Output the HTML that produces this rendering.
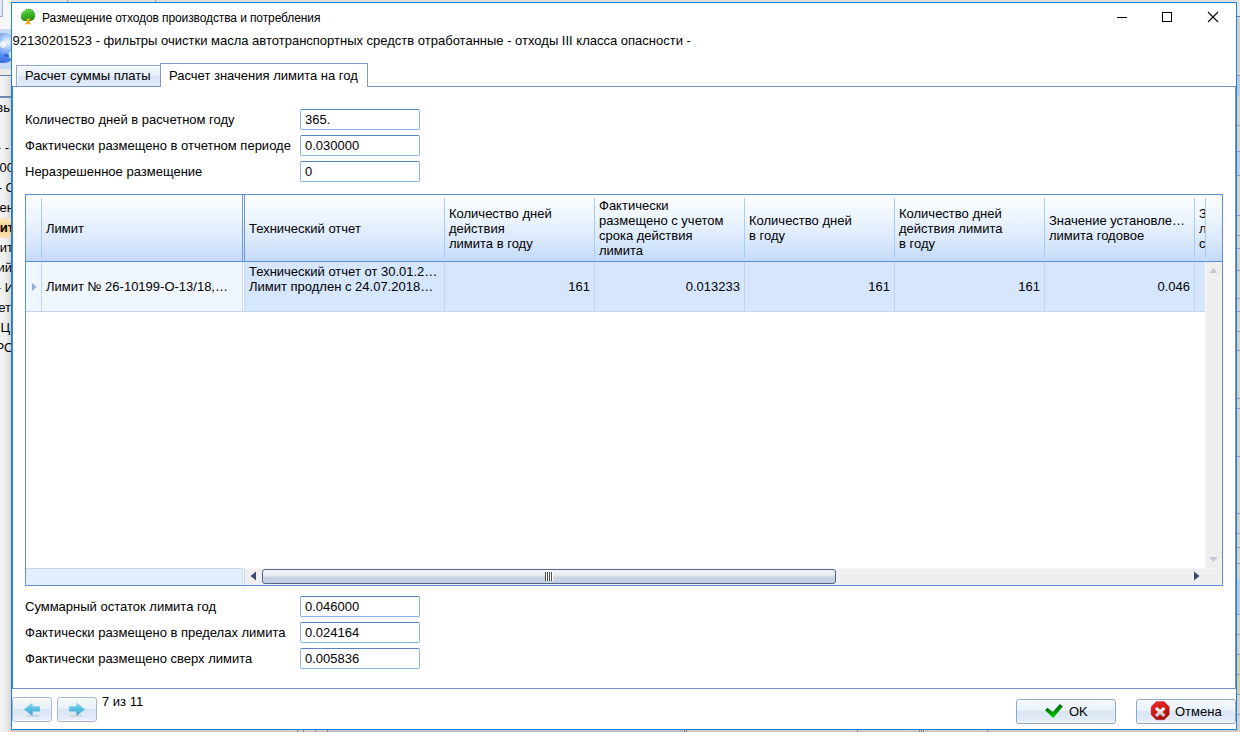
<!DOCTYPE html>
<html><head><meta charset="utf-8">
<style>
*{margin:0;padding:0;box-sizing:border-box}
html,body{width:1240px;height:732px;overflow:hidden;background:#d6d6d6}
body{position:relative;font-family:"Liberation Sans",sans-serif;font-size:12px;color:#000}
.a{position:absolute}
.t{position:absolute;white-space:nowrap;line-height:15px;letter-spacing:0px;font-size:13px}
.fld{position:absolute;left:300px;width:120px;height:21px;border:1px solid #8fb2e6;border-top-color:#5b82bd;border-radius:2px;background:#fff}
.hsep{position:absolute;top:198px;width:1px;height:60px;background:#a9ccf7}
.rsep{position:absolute;top:262px;width:1px;height:49px;background:#c3d3ea}
.btn{position:absolute;border:1px solid #8ea7c9;border-radius:3px;background:linear-gradient(#f5f9fe 0%,#eaf1fa 45%,#d9e5f4 48%,#e2ebf7 85%,#eef4fb 100%);box-shadow:inset 0 1px 0 #fff,inset 0 -1px 0 #f6f9fd}
</style></head><body>
<!-- background app strips -->
<div class="a" style="left:0;top:0;width:1240px;height:3px;background:#dedede"></div>
<div class="a" style="left:67px;top:0;width:1px;height:2px;background:#9a9a9a"></div>
<div class="a" style="left:155px;top:0;width:1px;height:2px;background:#9a9a9a"></div>
<div class="a" style="left:0;top:730px;width:1240px;height:2px;background:#cbcbcb"></div><div class="a" style="left:328px;top:730px;width:356px;height:2px;background:#b7c1d1"></div><div class="a" style="left:297px;top:730px;width:1px;height:2px;background:#7b8496"></div><div class="a" style="left:303px;top:730px;width:1px;height:2px;background:#7b8496"></div><div class="a" style="left:315px;top:730px;width:1px;height:2px;background:#7b8496"></div><div class="a" style="left:327px;top:730px;width:1px;height:2px;background:#7b8496"></div><div class="a" style="left:684px;top:730px;width:1px;height:2px;background:#7b8496"></div><div class="a" style="left:686px;top:730px;width:1px;height:2px;background:#7b8496"></div><div class="a" style="left:857px;top:730px;width:1px;height:2px;background:#7b8496"></div><div class="a" style="left:919px;top:730px;width:1px;height:2px;background:#7b8496"></div><div class="a" style="left:921px;top:730px;width:1px;height:2px;background:#7b8496"></div><div class="a" style="left:923px;top:730px;width:1px;height:2px;background:#7b8496"></div><div class="a" style="left:987px;top:730px;width:1px;height:2px;background:#7b8496"></div>
<div class="a" style="left:0;top:0;width:11px;height:732px;overflow:hidden;background:linear-gradient(90deg,#f3f3f3,#ebebeb 60%,#dadada 90%,#d9d3cd)">
  <div class="a" style="left:0;top:0;width:11px;height:29px;background:#f6f6f6"></div>
  <div class="a" style="left:0;top:0;width:3px;height:17px;border-right:1px solid #9fb3d0;border-bottom:1px solid #9fb3d0;background:#dfe8f4"></div>
  <div class="a" style="left:0;top:29px;width:11px;height:40px;background:#c8daf1"></div>
  <div class="a" style="left:-12px;top:33px;width:30px;height:30px;border-radius:50%;overflow:hidden;background:radial-gradient(circle at 65% 30%,#f4f8ff 0,#a9c8f6 22%,#4f86ea 55%,#2a62dc 85%,#6f9ff0 100%)">
    <div class="a" style="left:12px;top:8px;width:6px;height:7px;border-radius:50%;background:rgba(255,255,255,0.75)"></div>
    <div class="a" style="left:20px;top:18px;width:9px;height:8px;border-radius:50%;background:rgba(235,245,255,0.8)"></div>
    <div class="a" style="left:16px;top:21px;width:5px;height:3px;background:rgba(20,70,220,0.6)"></div>
  </div>
  <div class="a" style="left:0;top:69px;width:11px;height:6px;background:#ece9e4"></div>
  <div class="a" style="left:0;top:75px;width:11px;height:1px;background:#5f7fae"></div>
  <div class="a" style="left:0;top:96px;width:11px;height:2px;background:#6d88b3"></div>
  <div class="a" style="left:0;top:218px;width:11px;height:20px;background:linear-gradient(#f9e7c2,#f5cf85 50%,#f8e2b5)"></div>
  <div class="t" style="right:1px;top:100px;">вь</div><div class="t" style="right:2px;top:140px;">- -</div><div class="t" style="right:-3px;top:160px;">000</div><div class="t" style="right:-4px;top:180px;">- С</div><div class="t" style="right:-3px;top:200px;">ден</div><div class="t" style="right:-3px;top:220px;font-weight:bold;">ит</div><div class="t" style="right:-2px;top:240px;">ит</div><div class="t" style="right:-1px;top:260px;">ий</div><div class="t" style="right:-3px;top:280px;">- И</div><div class="t" style="right:0px;top:300px;">ет</div><div class="t" style="right:1px;top:320px;">Ц</div><div class="t" style="right:-3px;top:340px;">РО</div>
</div>
<div class="a" style="left:1237px;top:0;width:3px;height:732px;overflow:hidden;background:#d5d1cd">
  <div class="a" style="left:0;top:0;width:3px;height:16px;background:#e6e6e6"></div>
  <div class="a" style="left:0;top:16px;width:3px;height:1px;background:#5b7db0"></div>
  <div class="a" style="left:0;top:75px;width:3px;height:21px;background:#bccadd;border-top:1px solid #8da0bf"></div>
  <div class="a" style="left:0;top:151px;width:3px;height:25px;background:#c2cfe0;border-top:1px solid #8da0bf;border-bottom:1px solid #8da0bf"></div>
  <div class="a" style="left:0;top:580px;width:3px;height:34px;background:#bccadd"></div>
  <div class="a" style="left:0;top:654px;width:3px;height:40px;background:#d6cfa8"></div>
  <div class="a" style="left:0;top:125px;width:3px;height:1px;background:#8da0bf"></div><div class="a" style="left:0;top:215px;width:3px;height:1px;background:#8da0bf"></div><div class="a" style="left:0;top:235px;width:3px;height:1px;background:#8da0bf"></div><div class="a" style="left:0;top:248px;width:3px;height:1px;background:#8da0bf"></div><div class="a" style="left:0;top:270px;width:3px;height:1px;background:#8da0bf"></div><div class="a" style="left:0;top:298px;width:3px;height:1px;background:#8da0bf"></div><div class="a" style="left:0;top:311px;width:3px;height:1px;background:#8da0bf"></div><div class="a" style="left:0;top:331px;width:3px;height:1px;background:#8da0bf"></div><div class="a" style="left:0;top:350px;width:3px;height:1px;background:#8da0bf"></div><div class="a" style="left:0;top:398px;width:3px;height:1px;background:#8da0bf"></div><div class="a" style="left:0;top:408px;width:3px;height:1px;background:#8da0bf"></div><div class="a" style="left:0;top:456px;width:3px;height:1px;background:#8da0bf"></div><div class="a" style="left:0;top:513px;width:3px;height:1px;background:#8da0bf"></div><div class="a" style="left:0;top:533px;width:3px;height:1px;background:#8da0bf"></div><div class="a" style="left:0;top:547px;width:3px;height:1px;background:#8da0bf"></div><div class="a" style="left:0;top:563px;width:3px;height:1px;background:#8da0bf"></div><div class="a" style="left:0;top:614px;width:3px;height:1px;background:#8da0bf"></div><div class="a" style="left:0;top:634px;width:3px;height:1px;background:#8da0bf"></div><div class="a" style="left:0;top:654px;width:3px;height:1px;background:#8da0bf"></div><div class="a" style="left:0;top:674px;width:3px;height:1px;background:#8da0bf"></div><div class="a" style="left:0;top:694px;width:3px;height:1px;background:#8da0bf"></div><div class="a" style="left:0;top:714px;width:3px;height:1px;background:#8da0bf"></div>
</div>
<!-- dialog -->
<div class="a" style="left:11px;top:2px;width:1226px;height:728px;background:#fff;border:1px solid #1883d7"></div>

<!-- title -->
<svg class="a" style="left:16px;top:6px" width="24" height="21" viewBox="0 0 24 21"><defs><linearGradient id="gtr" x1="0" y1="0" x2="0.3" y2="1"><stop offset="0" stop-color="#7ee25a"/><stop offset="0.5" stop-color="#44bb2c"/><stop offset="1" stop-color="#1e9616"/></linearGradient><linearGradient id="gtk" x1="0" y1="0" x2="1" y2="0"><stop offset="0" stop-color="#c9780c"/><stop offset="0.5" stop-color="#f6b814"/><stop offset="1" stop-color="#c9780c"/></linearGradient></defs>
<path d="M6.5 14.5 L5 12.5 L4.9 9 L5.8 6.8 L7.5 5 L10 3.6 L13 3 L15.5 3.6 L17.3 5.2 L18.7 7.8 L18.9 11 L17.8 13.4 L15.5 14.8 L12 15 L9 15 Z" fill="url(#gtr)"/>
<path d="M10 3.6 L13 3 L15.5 3.6 L17.3 5.2 L18.7 7.8 L18.9 11" fill="none" stroke="#188a10" stroke-width="1" stroke-dasharray="1 1" opacity="0.8"/>
<path d="M8.8 18.3 L10.6 16.8 L10.9 14 L9.3 12.4 L11.3 13 L12.6 12.6 L14.7 11.2 L13.8 13.8 L13.7 16.8 L15 18.3 Z" fill="url(#gtk)"/>
</svg>
<div class="t" style="left:42px;top:11px;font-size:12px;letter-spacing:-0.1px">Размещение отходов производства и потребления</div>
<div class="a" style="left:1117px;top:17px;width:10px;height:1px;background:#000"></div>
<div class="a" style="left:1162px;top:12px;width:10px;height:10px;border:1px solid #000"></div>
<svg class="a" style="left:1207px;top:11px" width="12" height="12" viewBox="0 0 12 12"><path d="M1 1 L11 11 M11 1 L1 11" stroke="#000" stroke-width="1.1"/></svg>

<div class="t" style="left:12.5px;top:33px">92130201523 - фильтры очистки масла автотранспортных средств отработанные - отходы III класса опасности -</div>

<!-- tabs -->
<div class="a" style="left:16px;top:65px;width:145px;height:22px;border:1px solid #8aa3c6;border-bottom:none;background:linear-gradient(#f3f7fd 0%,#e9f0fa 45%,#d8e4f3 50%,#e4ecf7 100%);box-shadow:inset 1px 1px 0 #fff"></div>
<div class="t" style="left:25px;top:68px">Расчет суммы платы</div>
<div class="a" style="left:12px;top:86px;width:1224px;height:603px;border:1px solid #7592bb;border-left-color:#3f84d2"></div>
<div class="a" style="left:160px;top:63px;width:208px;height:24px;border:1px solid #7f9bc2;border-bottom:none;background:#fff"></div>
<div class="t" style="left:169px;top:68px">Расчет значения лимита на год</div>

<!-- top fields -->
<div class="t" style="left:25px;top:112px">Количество дней в расчетном году</div>
<div class="t" style="left:25px;top:138px">Фактически размещено в отчетном периоде</div>
<div class="t" style="left:25px;top:164px">Неразрешенное размещение</div>
<div class="fld" style="top:109px"></div><div class="t" style="left:305px;top:112px">365.</div>
<div class="fld" style="top:135px"></div><div class="t" style="left:305px;top:138px">0.030000</div>
<div class="fld" style="top:161px"></div><div class="t" style="left:305px;top:164px">0</div>

<!-- grid -->
<div class="a" style="left:25px;top:194px;width:1198px;height:392px;border:1px solid #5d8fd6;background:#fff"></div>
<div class="a" style="left:26px;top:195px;width:1196px;height:66px;background:linear-gradient(#fdfeff 0%,#eaf3fe 40%,#d6e6fb 75%,#c3daf9 100%)"></div>
<div class="a" style="left:26px;top:261px;width:1196px;height:1px;background:#5d8fd6"></div>
<div class="hsep" style="left:41px"></div>
<div class="a" style="left:242px;top:195px;width:1px;height:66px;background:#6f9ad8"></div>
<div class="a" style="left:244px;top:195px;width:1px;height:66px;background:#6f9ad8"></div>
<div class="hsep" style="left:444px"></div>
<div class="hsep" style="left:594px"></div>
<div class="hsep" style="left:744px"></div>
<div class="hsep" style="left:894px"></div>
<div class="hsep" style="left:1044px"></div>
<div class="hsep" style="left:1194px"></div>
<div class="hsep" style="left:1205px"></div>

<div class="t" style="left:46px;top:221px">Лимит</div>
<div class="t" style="left:249px;top:221px">Технический отчет</div>
<div class="t" style="left:449px;top:206px">Количество дней<br>действия<br>лимита в году</div>
<div class="t" style="left:599px;top:198px">Фактически<br>размещено с учетом<br>срока действия<br>лимита</div>
<div class="t" style="left:749px;top:213px">Количество дней<br>в году</div>
<div class="t" style="left:899px;top:206px">Количество дней<br>действия лимита<br>в году</div>
<div class="t" style="left:1049px;top:213px">Значение установле…<br>лимита годовое</div>
<div class="a" style="left:1195px;top:195px;width:10px;height:66px;overflow:hidden"><div class="t" style="left:4px;top:11px">З<br>л<br>с</div></div>

<!-- data row -->
<div class="a" style="left:26px;top:262px;width:216px;height:49px;background:#f0f6fe"></div>
<div class="a" style="left:245px;top:262px;width:960px;height:49px;background:#d5e6fd"></div>
<div class="a" style="left:26px;top:311px;width:1179px;height:1px;background:#c4d5ec"></div>
<div class="rsep" style="left:41px"></div>
<div class="rsep" style="left:242px;background:#c8daf2"></div>
<div class="rsep" style="left:244px;background:#c8daf2"></div>
<div class="rsep" style="left:444px"></div>
<div class="rsep" style="left:594px"></div>
<div class="rsep" style="left:744px"></div>
<div class="rsep" style="left:894px"></div>
<div class="rsep" style="left:1044px"></div>
<div class="rsep" style="left:1194px"></div>
<svg class="a" style="left:32px;top:283px" width="6" height="9"><path d="M0 0 L4.6 4 L0 8 Z" fill="#8fb1dd"/></svg>
<div class="t" style="left:46px;top:279px">Лимит № 26-10199-О-13/18,…</div>
<div class="t" style="left:249px;top:264px">Технический отчет от 30.01.2…<br>Лимит продлен с 24.07.2018…</div>
<div class="t" style="left:444px;top:279px;width:146px;text-align:right">161</div>
<div class="t" style="left:594px;top:279px;width:146px;text-align:right">0.013233</div>
<div class="t" style="left:744px;top:279px;width:146px;text-align:right">161</div>
<div class="t" style="left:894px;top:279px;width:146px;text-align:right">161</div>
<div class="t" style="left:1044px;top:279px;width:146px;text-align:right">0.046</div>

<!-- vertical scrollbar -->
<div class="a" style="left:1205px;top:262px;width:17px;height:307px;background:#efefef;border-left:1px solid #fafafa"></div>
<svg class="a" style="left:1209px;top:267px" width="10" height="7"><path d="M0.5 6 L4.5 1 L8.5 6 Z" fill="#c3c7cf"/></svg>
<svg class="a" style="left:1209px;top:556px" width="10" height="7"><path d="M0.5 1 L4.5 6 L8.5 1 Z" fill="#c3c7cf"/></svg>

<!-- horizontal scrollbar -->
<div class="a" style="left:26px;top:568px;width:216px;height:17px;background:#e3eefc;border-top:1px solid #c5d6ec"></div>
<div class="a" style="left:242px;top:568px;width:1px;height:17px;background:#c8daf2"></div>
<div class="a" style="left:244px;top:568px;width:1px;height:17px;background:#c8daf2"></div>
<div class="a" style="left:245px;top:568px;width:977px;height:17px;background:#efefef;border-top:1px solid #f6f6f6"></div>
<svg class="a" style="left:250px;top:571px" width="7" height="11"><path d="M6 0.5 L0.5 5 L6 9.5 Z" fill="#3d4b6c"/></svg>
<svg class="a" style="left:1193px;top:571px" width="7" height="11"><path d="M1 0.5 L6.5 5 L1 9.5 Z" fill="#3d4b6c"/></svg>
<div class="a" style="left:262px;top:569px;width:574px;height:15px;border:1px solid #56648a;border-radius:3px;background:linear-gradient(#f2f4f7 0%,#e6e9ee 45%,#c9d3e1 55%,#c5d0df 100%)"></div>
<div class="a" style="left:545px;top:572px;width:1px;height:9px;background:#4a4a4a;box-shadow:1px 0 #fff"></div>
<div class="a" style="left:547px;top:572px;width:1px;height:9px;background:#4a4a4a;box-shadow:1px 0 #fff"></div>
<div class="a" style="left:549px;top:572px;width:1px;height:9px;background:#4a4a4a;box-shadow:1px 0 #fff"></div>
<div class="a" style="left:551px;top:572px;width:1px;height:9px;background:#4a4a4a;box-shadow:1px 0 #fff"></div>

<!-- bottom fields -->
<div class="t" style="left:25px;top:599px">Суммарный остаток лимита год</div>
<div class="t" style="left:25px;top:625px">Фактически размещено в пределах лимита</div>
<div class="t" style="left:25px;top:651px">Фактически размещено сверх лимита</div>
<div class="fld" style="top:596px"></div><div class="t" style="left:305px;top:599px">0.046000</div>
<div class="fld" style="top:622px"></div><div class="t" style="left:305px;top:625px">0.024164</div>
<div class="fld" style="top:648px"></div><div class="t" style="left:305px;top:651px">0.005836</div>

<!-- footer -->
<div class="btn" style="left:12px;top:697px;width:40px;height:25px;border-color:#a3b6d2"></div>
<div class="btn" style="left:57px;top:697px;width:40px;height:25px;border-color:#a3b6d2"></div>
<svg class="a" style="left:23px;top:702px" width="18" height="15" viewBox="0 0 18 15"><defs><linearGradient id="gar" x1="0" y1="0" x2="0" y2="1"><stop offset="0" stop-color="#8ad8ef"/><stop offset="0.45" stop-color="#5cc3e4"/><stop offset="1" stop-color="#3aa3cf"/></linearGradient></defs><ellipse cx="10" cy="13.8" rx="7" ry="1" fill="#b8c4d4" opacity="0.6"/><path d="M1 7.4 L8.8 1 L9.7 1.5 L9.7 4.2 L16.6 4.2 L16.9 4.8 L16.9 9.6 L9.7 9.6 L9.7 12.8 L8.8 13.2 Z" fill="url(#gar)"/></svg>
<svg class="a" style="left:68px;top:702px" width="18" height="15" viewBox="0 0 18 15"><ellipse cx="8" cy="13.8" rx="7" ry="1" fill="#b8c4d4" opacity="0.6"/><path d="M17 7.4 L9.2 1 L8.3 1.5 L8.3 4.2 L1.4 4.2 L1.1 4.8 L1.1 9.6 L8.3 9.6 L8.3 12.8 L9.2 13.2 Z" fill="url(#gar)"/></svg>
<div class="t" style="left:102px;top:694px">7 из 11</div>

<div class="btn" style="left:1016px;top:699px;width:100px;height:25px"></div>
<svg class="a" style="left:1040px;top:699px" width="30" height="25" viewBox="0 0 30 25"><defs><linearGradient id="gck" x1="0" y1="0" x2="0.3" y2="1"><stop offset="0" stop-color="#005e00"/><stop offset="0.55" stop-color="#008a00"/><stop offset="1" stop-color="#00d200"/></linearGradient></defs><path d="M5 11.3 L7.5 8.7 L12.8 13 L19.8 5 L22.9 7.5 L13.3 19 Z" fill="url(#gck)"/></svg>
<div class="t" style="left:1069px;top:704px">OK</div>
<div class="btn" style="left:1136px;top:699px;width:100px;height:25px"></div>
<svg class="a" style="left:1146px;top:699px" width="30" height="25" viewBox="0 0 30 25"><defs><linearGradient id="gcr" x1="0" y1="0" x2="0.4" y2="1"><stop offset="0" stop-color="#ec2a2a"/><stop offset="0.6" stop-color="#d21616"/><stop offset="1" stop-color="#a80c0c"/></linearGradient><linearGradient id="gcx" x1="0" y1="0" x2="0" y2="1"><stop offset="0" stop-color="#ffffff"/><stop offset="1" stop-color="#bdbdbd"/></linearGradient></defs><path d="M10.2 2.6 L18.2 2.6 L23.3 7.7 L23.3 15.7 L18.2 20.8 L10.2 20.8 L5.1 15.7 L5.1 7.7 Z" fill="url(#gcr)" stroke="#8a0a0a" stroke-width="0.5" stroke-opacity="0.5"/><path d="M10 8.8 L18.4 17.2 M18.4 8.8 L10 17.2" stroke="url(#gcx)" stroke-width="3.2" stroke-linecap="butt"/></svg>
<div class="t" style="left:1175px;top:704px">Отмена</div>
<div class="a" style="left:1236px;top:2px;width:1px;height:728px;background:#1883d7"></div>
</body></html>
